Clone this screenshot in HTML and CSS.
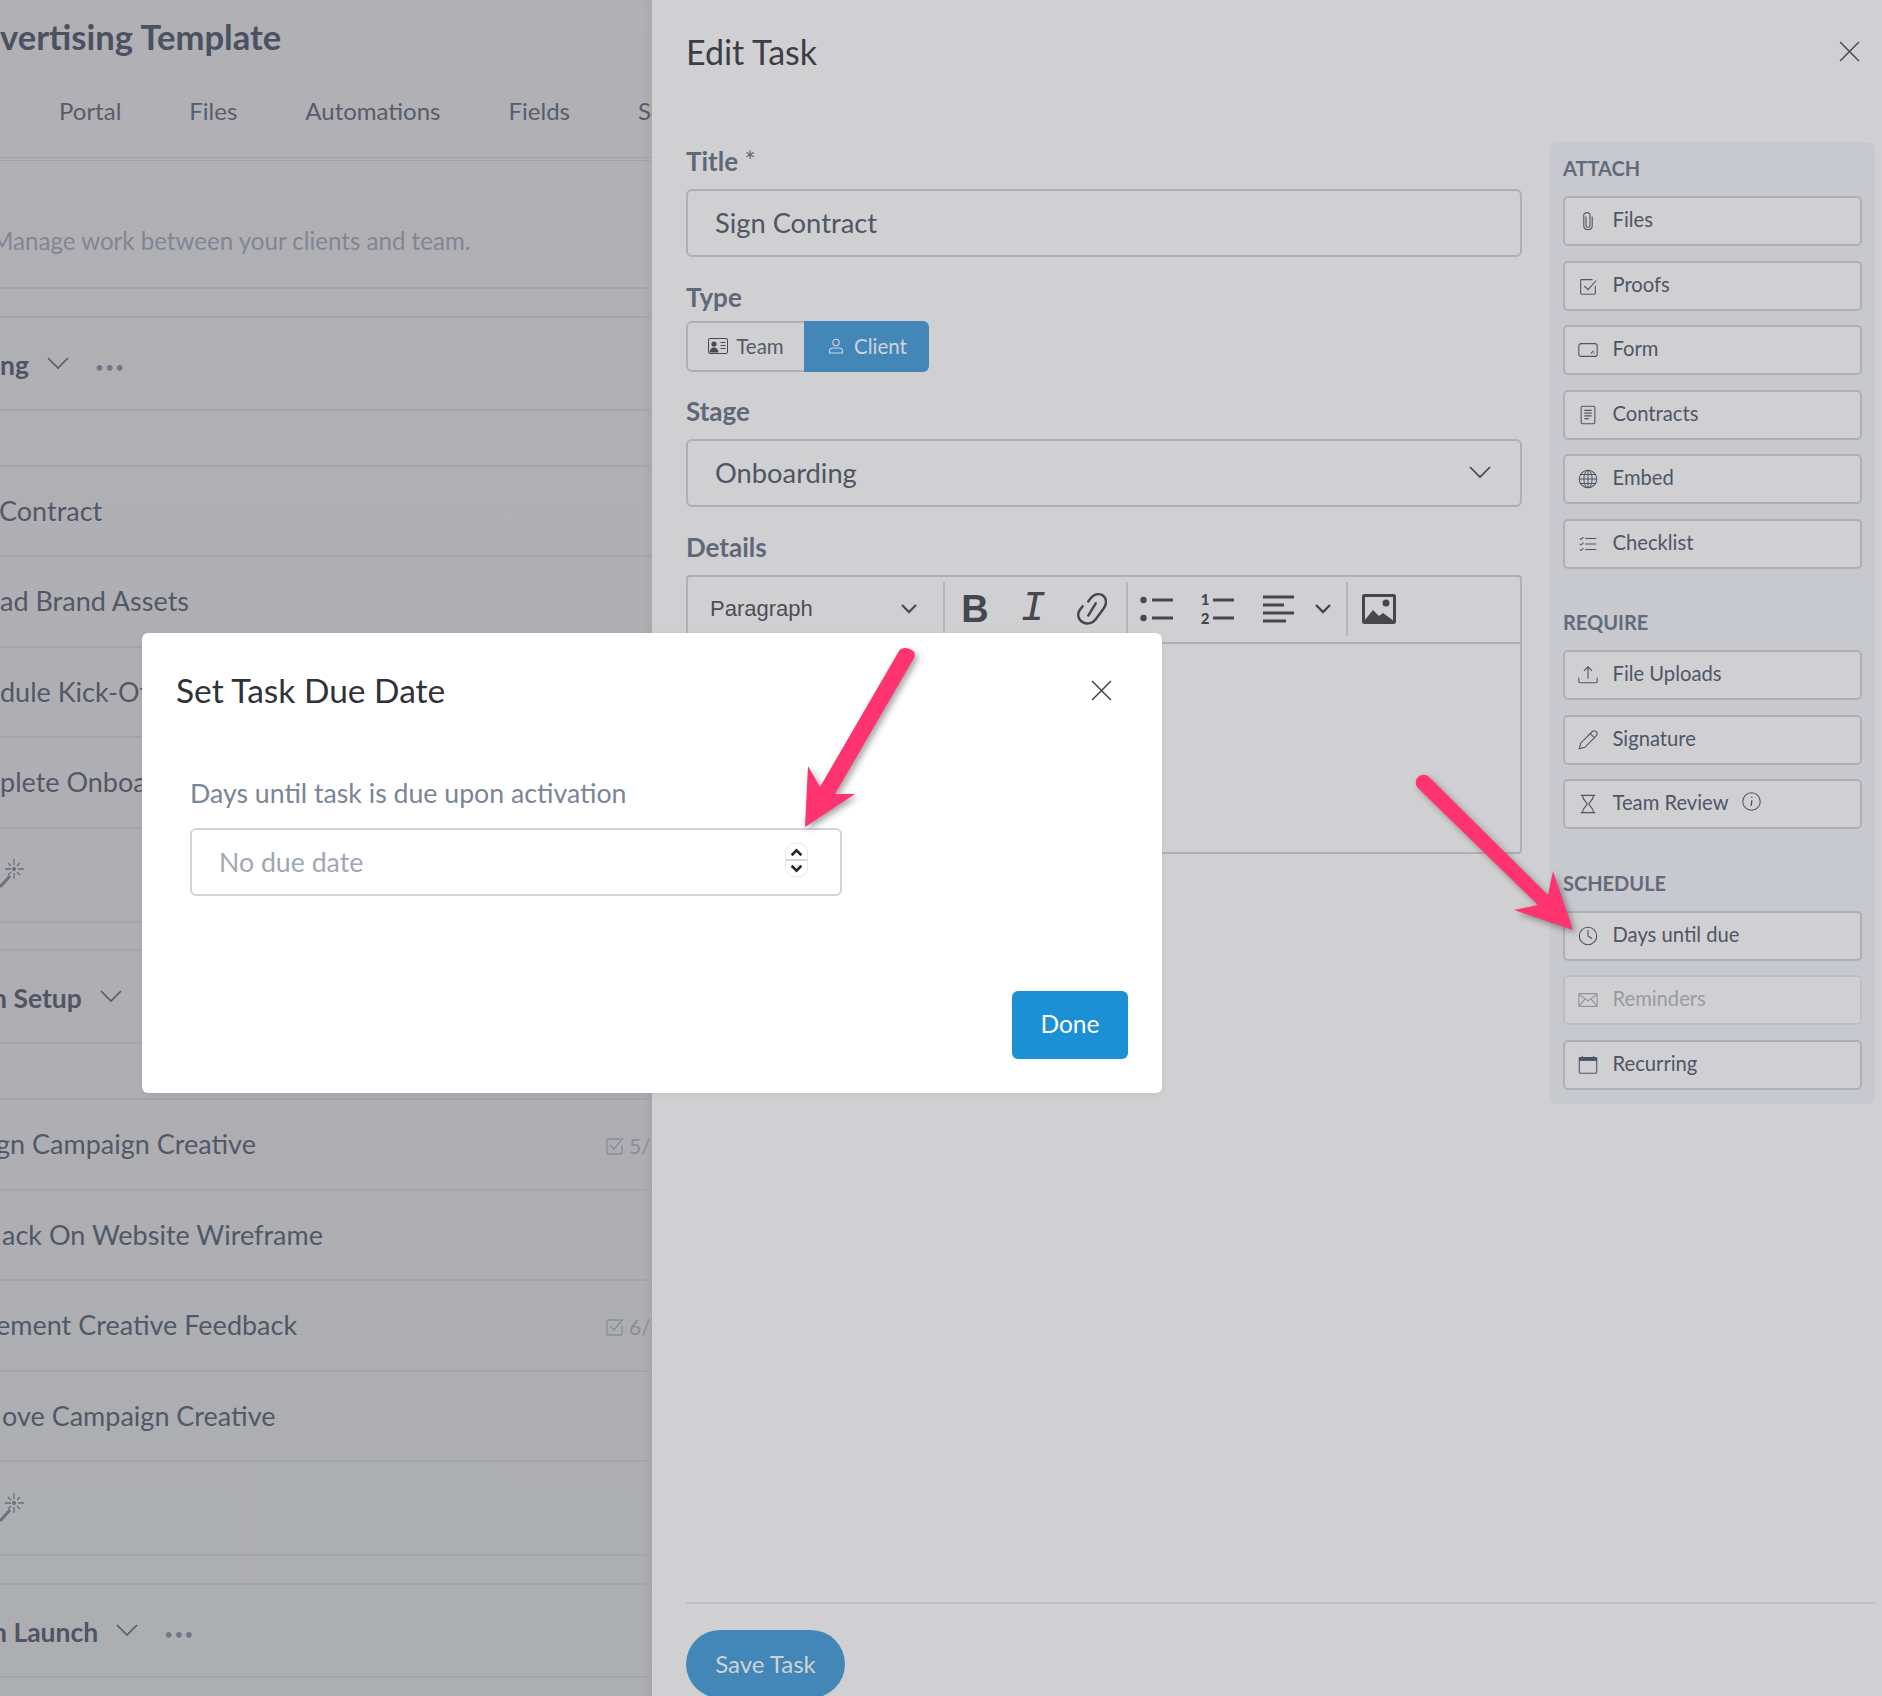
FILE: index.html
```html
<!DOCTYPE html>
<html lang="en">
<head>
  <meta charset="UTF-8">
  <title>Edit Task</title>
  <link rel="stylesheet" href="styles.css">
</head>
<body>
  <svg width="0" height="0" class="defs">
    <symbol id="chev" viewBox="0 0 24 14"><path d="M2 2l10 10L22 2" fill="none" stroke="currentColor" stroke-width="1.6"/></symbol>
    <symbol id="wand" viewBox="0 0 26 30"><path d="M0 29l10-11" stroke="currentColor" stroke-width="3" fill="none"/><path d="M14 1v6M14 15v6M5 11h6M18 11h6M8 5l3 3M20 5l-3 3M8 17l3-3M20 17l-3-3" stroke="currentColor" stroke-width="1.3" fill="none"/><circle cx="14" cy="11" r="2" fill="currentColor"/></symbol>
    <symbol id="check" viewBox="0 0 20 20"><path d="M17 9v8a1 1 0 0 1-1 1H3a1 1 0 0 1-1-1V4a1 1 0 0 1 1-1h12" fill="none" stroke="currentColor" stroke-width="1.3"/><path d="M5 9l4 4 9-11" fill="none" stroke="currentColor" stroke-width="1.3"/></symbol>
  </svg>

  <main class="page">
    <div class="project">
      <h1 class="project-title">vertising Template</h1>
      <nav class="tabs">
        <span>Portal</span><span>Files</span><span>Automations</span><span>Fields</span><span>Settings</span>
      </nav>
      <p class="project-desc">Manage work between your clients and team.</p>
      <div class="stage-gap"></div>

      <div class="stage-head"><b>ng</b><svg class="chev"><use href="#chev"/></svg><span class="dots">•••</span></div>
      <div class="row short"></div>
      <div class="row"><span class="nudge-back">Contract</span></div>
      <div class="row">ad Brand Assets</div>
      <div class="row">dule Kick-Off</div>
      <div class="row">plete Onboarding</div>
      <div class="row wand-row"><svg class="wand"><use href="#wand"/></svg></div>
      <div class="stage-gap"></div>

      <div class="stage-head"><b class="cut">n Setup</b><svg class="chev"><use href="#chev"/></svg></div>
      <div class="row short"></div>
      <div class="row"><span class="cut-letter">gn Campaign Creative</span><span class="count"><svg class="count-icon"><use href="#check"/></svg>5/5</span></div>
      <div class="row"><span class="nudge-on">ack On Website Wireframe</span></div>
      <div class="row"><span class="cut-letter">ement Creative Feedback</span><span class="count"><svg class="count-icon"><use href="#check"/></svg>6/6</span></div>
      <div class="row"><span class="nudge-on">ove Campaign Creative</span></div>
      <div class="row wand-row"><svg class="wand"><use href="#wand"/></svg></div>
      <div class="stage-gap"></div>

      <div class="stage-head"><b class="cut">n Launch</b><svg class="chev"><use href="#chev"/></svg><span class="dots">•••</span></div>
    </div>

    <aside class="drawer">
      <header class="drawer-head">
        <h2>Edit Task</h2>
        <svg class="close" viewBox="0 0 20 20"><path d="M1 1l18 18M19 1L1 19" stroke="currentColor" stroke-width="1.4" fill="none"/></svg>
      </header>

      <div class="drawer-body">
        <form class="task-form">
          <label class="field-label">Title <small>*</small></label>
          <div class="input">Sign Contract</div>

          <label class="field-label tight">Type</label>
          <div class="toggle">
            <span class="toggle-btn">
              <svg viewBox="0 0 20 16" class="toggle-icon"><rect x="0.5" y="0.5" width="19" height="15" rx="1.5" fill="none" stroke="currentColor"/><circle cx="6" cy="6" r="2.6" fill="currentColor"/><path d="M1.5 14.5c0-3 2-5 4.5-5s4.500 2 4.500 5z" fill="currentColor"/><path d="M12.500 4.500h5M12.500 7.500h5M12.500 10.500h5" stroke="currentColor" stroke-width="1.200"/></svg>Team
            </span>
            <span class="toggle-btn on">
              <svg viewBox="0 0 16 16" class="toggle-icon small"><circle cx="8" cy="4.500" r="3.200" fill="none" stroke="currentColor" stroke-width="1.100"/><path d="M1.500 15v-1.500c0-2 1.500-3.500 3.500-3.500h6c2 0 3.500 1.500 3.500 3.500V15z" fill="none" stroke="currentColor" stroke-width="1.100"/></svg>Client
            </span>
          </div>

          <label class="field-label">Stage</label>
          <div class="input select">Onboarding<svg class="select-chev"><use href="#chev"/></svg></div>

          <label class="field-label">Details</label>
          <div class="editor">
            <div class="toolbar">
              <span class="format">Paragraph<svg viewBox="0 0 18 12" class="tool-chev"><path d="M2 2l7 7 7-7" fill="none" stroke="currentColor" stroke-width="2.400"/></svg></span>
              <span class="tool-group first">
                <span class="glyph-b">B</span>
                <span class="glyph-i">I</span>
                <svg viewBox="0 0 32 36" class="tool-link"><path d="M12 10l3-4c4-5 11-5 14-1s2 9-1 13l-8 11c-3 4-9 6-14 3S0 23 3 19l3-4" fill="none" stroke="currentColor" stroke-width="2.600" stroke-linecap="round"/><path d="M12 25l8-13" stroke="currentColor" stroke-width="2.600" stroke-linecap="round"/></svg>
              </span>
              <span class="tool-group second">
                <svg viewBox="0 0 34 26" class="tool-list"><circle cx="3.500" cy="4" r="3.200" fill="currentColor"/><circle cx="3.500" cy="22" r="3.200" fill="currentColor"/><path d="M12 4h21M12 22h21" stroke="currentColor" stroke-width="3"/></svg>
                <span class="tool-num"><span class="nums"><i>1</i><i>2</i></span><svg viewBox="0 0 22 26" class="tool-numlines"><path d="M1 4h21M1 22h21" stroke="currentColor" stroke-width="3"/></svg></span>
                <svg viewBox="0 0 32 28" class="tool-align"><path d="M0 2h31M0 10h21M0 18h31M0 26h23" stroke="currentColor" stroke-width="3"/></svg>
                <svg viewBox="0 0 18 12" class="tool-chev near"><path d="M2 2l7 7 7-7" fill="none" stroke="currentColor" stroke-width="2.400"/></svg>
              </span>
              <span class="tool-group third">
                <svg viewBox="0 0 34 30" class="tool-image"><rect x="1.500" y="1.500" width="31" height="27" rx="1" fill="none" stroke="currentColor" stroke-width="3"/><circle cx="24" cy="9" r="3.500" fill="currentColor"/><path d="M2 27l9-11 6 6 4-3 11 8z" fill="currentColor"/></svg>
              </span>
            </div>
            <div class="editor-area"></div>
          </div>
        </form>

        <div class="side-panel">
          <h3>ATTACH</h3>
          <div class="side-btn"><svg viewBox="0 0 24 24"><path d="M9.800 7v10c0 2.500 4.400 2.500 4.400 0V5.500c0-3.500-6.800-3.500-6.800 0V17c0 6 9.200 6 9.200 0V7" fill="none" stroke="currentColor" stroke-width="1.200"/></svg>Files</div>
          <div class="side-btn"><svg viewBox="0 0 24 24"><path d="M20 12v8a1 1 0 0 1-1 1H5a1 1 0 0 1-1-1V6a1 1 0 0 1 1-1h12" fill="none" stroke="currentColor" stroke-width="1.200"/><path d="M8 12l4 4 9-10" fill="none" stroke="currentColor" stroke-width="1.200"/></svg>Proofs</div>
          <div class="side-btn"><svg viewBox="0 0 24 24"><rect x="2" y="5" width="20" height="14" rx="2.500" fill="none" stroke="currentColor" stroke-width="1.200"/><path d="M15 16l3-3M18 16l1-1" stroke="currentColor" stroke-width="1.100"/></svg>Form</div>
          <div class="side-btn"><svg viewBox="0 0 24 24"><rect x="4.500" y="2.500" width="15" height="19" rx="1.500" fill="none" stroke="currentColor" stroke-width="1.200"/><path d="M8 7h8M8 10h8M8 13h8M8 16h5" stroke="currentColor" stroke-width="1.200"/></svg>Contracts</div>
          <div class="side-btn"><svg viewBox="0 0 24 24"><circle cx="12" cy="12" r="9.500" fill="none" stroke="currentColor" stroke-width="1.200"/><ellipse cx="12" cy="12" rx="4.500" ry="9.500" fill="none" stroke="currentColor" stroke-width="1.100"/><path d="M12 2.500v19M2.500 12h19M4 7h16M4 17h16" stroke="currentColor" stroke-width="1.100"/></svg>Embed</div>
          <div class="side-btn"><svg viewBox="0 0 24 24"><path d="M9 6h12M9 12h12M9 18h12" stroke="currentColor" stroke-width="1.200"/><path d="M3 6l1.500 1L7 4.500M3 12l1.500 1L7 10.500M3 18l1.500 1L7 16.500" fill="none" stroke="currentColor" stroke-width="1.100"/></svg>Checklist</div>

          <h3 class="spaced">REQUIRE</h3>
          <div class="side-btn"><svg viewBox="0 0 24 24"><path d="M12 16V3M7.500 7.500L12 3l4.500 4.500" fill="none" stroke="currentColor" stroke-width="1.200"/><path d="M2 15v4c0 1 .5 1.500 1.500 1.500h17c1 0 1.500-.5 1.500-1.500v-4" fill="none" stroke="currentColor" stroke-width="1.200"/></svg>File Uploads</div>
          <div class="side-btn"><svg viewBox="0 0 24 24"><path d="M2.500 21.500l1.500-6L16.500 3c1.500-1.500 3.500-1 4.500 0s1.500 3 0 4.500L8.500 20z" fill="none" stroke="currentColor" stroke-width="1.200"/><path d="M14.500 5l4.500 4.500" stroke="currentColor" stroke-width="1.200"/></svg>Signature</div>
          <div class="side-btn"><svg viewBox="0 0 24 24"><path d="M4 2.500h16M4 21.500h16M6 2.500c0 6 5 7 5 9.500s-5 3.500-5 9.500M18 2.500c0 6-5 7-5 9.500s5 3.500 5 9.500" fill="none" stroke="currentColor" stroke-width="1.300"/></svg>Team Review<svg viewBox="0 0 24 24" class="info"><circle cx="12" cy="12" r="10" fill="none" stroke="currentColor" stroke-width="1.200"/><path d="M12.500 10.500l-1 6.500M11.500 7h1.500" fill="none" stroke="currentColor" stroke-width="1.500"/></svg></div>

          <h3 class="spaced">SCHEDULE</h3>
          <div class="side-btn"><svg viewBox="0 0 24 24"><circle cx="12" cy="12" r="9.500" fill="none" stroke="currentColor" stroke-width="1.200"/><path d="M12 5.500V12l4.500 3" fill="none" stroke="currentColor" stroke-width="1.200"/></svg>Days until due</div>
          <div class="side-btn off"><svg viewBox="0 0 24 24"><rect x="2" y="5" width="20" height="14" rx="1" fill="none" stroke="currentColor" stroke-width="1.200"/><path d="M2.500 6L12 13l9.500-7M2.500 18.500L9 10.500M21.500 18.500L15 10.500" fill="none" stroke="currentColor" stroke-width="1.200"/></svg>Reminders</div>
          <div class="side-btn"><svg viewBox="0 0 24 24"><rect x="2.500" y="4" width="19" height="17" rx="1" fill="none" stroke="currentColor" stroke-width="1.200"/><path d="M2.500 4h19v3h-19zM6 2v2M18 2v2" fill="currentColor" stroke="currentColor" stroke-width="1"/></svg>Recurring</div>
        </div>
      </div>

      <footer class="drawer-foot">
        <button type="button" class="save-btn">Save Task</button>
      </footer>
    </aside>
  </main>

  <div class="modal">
    <div class="modal-head">
      <h2>Set Task Due Date</h2>
      <svg class="modal-close" viewBox="0 0 20 20"><path d="M1 1l18 18M19 1L1 19" stroke="currentColor" stroke-width="1.400" fill="none"/></svg>
    </div>
    <label class="modal-label">Days until task is due upon activation</label>
    <div class="modal-input">
      <span>No due date</span>
      <span class="spinner">
        <svg viewBox="0 0 12 8"><path d="M1.500 6.500L6 2l4.500 4.500" fill="none" stroke="currentColor" stroke-width="2.400"/></svg>
        <svg viewBox="0 0 12 8"><path d="M1.500 1.500L6 6l4.500-4.500" fill="none" stroke="currentColor" stroke-width="2.400"/></svg>
      </span>
    </div>
    <div class="modal-foot"><button type="button" class="done-btn">Done</button></div>
  </div>

  <!-- callout arrows drawn on the screenshot -->
  <svg class="callouts" viewBox="0 0 1882 1696">
    <path d="M899 651C902 646 910 648 914 652C915 654 915 656 914 658L835 794L855 794L805 827L808 766L820 787Z"/>
    <path d="M1418 777C1421 774 1426 774 1429 777L1548 895L1553 871L1573 930L1514 910L1538 905L1418 788C1415 785 1415 780 1418 777Z"/>
  </svg>
</body>
</html>
```

FILE: styles.css
```css
* { box-sizing: border-box; }
html, body {
  margin: 0;
  height: 1696px;
  overflow: hidden;
}
body {
  position: relative;
  font-family: 'Lato', sans-serif;
  background: #d0d0d2;
  color: #4e5563;
}
.defs { position: absolute; }
.page {
  display: flex;
  height: 1696px;
}

/* dimmed project page on the left */
.project {
  width: 652px;
  flex: none;
  overflow: hidden;
  background: linear-gradient(#b1b0b4, #adaeb2);
  box-shadow: inset -8px 0 8px -6px rgba(0,0,0,0.06);
  font-size: 27px;
}
.project-title {
  margin: 0;
  height: 78px;
  padding-top: 16px;
  font-size: 34.600px;
  line-height: 42px;
  font-weight: 700;
  color: #4a5160;
  white-space: nowrap;
}
.tabs {
  display: flex;
  gap: 68px;
  height: 83px;
  padding: 17px 0 0 59px;
  font-size: 24px;
  line-height: 32px;
  color: #565d6c;
  border-bottom: 4px double #a0a1a9;
  white-space: nowrap;
}
.project-desc {
  margin: 0;
  height: 128px;
  padding-top: 64px;
  margin-left: -9px;
  font-size: 24.100px;
  line-height: 32px;
  color: #7f8694;
  white-space: nowrap;
  border-bottom: 2px solid #a3a4ac;
}
.stage-gap {
  height: 28.500px;
  border-bottom: 2px solid #a3a4ac;
}
.stage-head {
  display: flex;
  align-items: center;
  height: 93px;
  padding-top: 3px;
  border-bottom: 2px solid #a3a4ac;
  font-size: 26.500px;
  color: #4e5564;
}
.stage-head b { white-space: nowrap; }
.stage-head b.cut { margin-left: -8px; }
.chev {
  width: 24px;
  height: 14px;
  margin: -4px 0 0 17px;
  color: #565d6c;
}
.dots {
  margin: 5px 0 0 25px;
  font-size: 15px;
  letter-spacing: 1.500px;
  color: #70778a;
}
.row {
  display: flex;
  align-items: center;
  position: relative;
  height: 90.500px;
  border-bottom: 2px solid #a3a4ac;
  line-height: 34px;
  color: #515867;
  white-space: nowrap;
}
.row.short { height: 56px; }
/* names run off the left edge of the panel, each by its own amount */
.cut-letter { margin-left: -4px; }
.nudge-back { margin-left: -1px; }
.nudge-on { margin-left: 2px; }
.wand-row { height: 94px; }
.wand {
  width: 26px;
  height: 30px;
  margin: -3px 0 0 0;
  color: #6a7080;
}
.count {
  position: absolute;
  left: 605px;
  display: flex;
  align-items: center;
  gap: 4px;
  margin-top: 3px;
  font-size: 21px;
  color: #878d9a;
}
.count-icon {
  width: 20px;
  height: 20px;
}

/* edit task drawer */
.drawer {
  flex: 1;
  min-width: 0;
  display: flex;
  flex-direction: column;
  height: 1696px;
  overflow: hidden;
  background: #d0d0d2;
}
.drawer-head {
  display: flex;
  justify-content: space-between;
  align-items: center;
  height: 102px;
  flex: none;
  padding: 0 22px 0 34px;
  margin-bottom: 40px;
}
.drawer-head h2 {
  margin: 0;
  font-size: 34px;
  font-weight: 400;
  color: #3b3e45;
}
.close {
  width: 21px;
  height: 21px;
  color: #474b54;
}
.drawer-body {
  display: flex;
  flex: 1;
  gap: 28px;
  align-items: flex-start;
  padding: 0 7px 0 34px;
}
.task-form {
  width: 836px;
  flex: none;
  padding-top: 5px;
}
.field-label {
  display: block;
  height: 30px;
  margin-bottom: 12px;
  font-size: 26px;
  line-height: 29px;
  font-weight: 700;
  color: #5f6878;
}
.field-label small {
  font-size: 26px;
  font-weight: 400;
}
.field-label.tight { margin-bottom: 8px; }
.input {
  display: flex;
  align-items: center;
  justify-content: space-between;
  height: 68px;
  margin-bottom: 26px;
  padding: 0 28px 2px 27px;
  border: 2px solid #aeb0b9;
  border-radius: 6px;
  font-size: 27.300px;
  color: #4e5563;
}
.select-chev {
  width: 24px;
  height: 14px;
  color: #3f4450;
}
.toggle {
  display: flex;
  height: 51px;
  margin-bottom: 25px;
  font-size: 20.500px;
}
.toggle-btn {
  display: flex;
  align-items: center;
  justify-content: center;
  gap: 8px;
  width: 118px;
  padding-bottom: 1px;
  border: 2px solid #aeb0b9;
  border-right: none;
  border-radius: 6px 0 0 6px;
  color: #545b69;
}
.toggle-btn.on {
  width: 125px;
  background: #4287b8;
  border: none;
  border-radius: 0 6px 6px 0;
  color: #d2d4d8;
}
.toggle-icon {
  width: 20px;
  height: 16px;
  color: #454a55;
}
.toggle-btn.on .toggle-icon {
  color: #d2d4d8;
}
.editor {
  height: 279px;
  border: 2px solid #aeb0b9;
  border-radius: 4px;
}
.toolbar {
  display: flex;
  align-items: center;
  height: 67px;
  padding-bottom: 2px;
  border-bottom: 2px solid #aeb0b9;
  color: #45474d;
}
.format {
  display: flex;
  align-items: center;
  justify-content: space-between;
  width: 255px;
  height: 54px;
  padding: 0 25px 0 22px;
  font-family: 'Liberation Sans', sans-serif;
  font-size: 22px;
  color: #4c4e54;
}
.tool-chev {
  width: 18px;
  height: 12px;
}
.tool-group {
  display: flex;
  align-items: center;
  height: 54px;
  border-left: 2px solid #b6b7bd;
}
.tool-group.first { width: 183px; padding-left: 15px; }
.tool-group.second { width: 220px; padding-left: 12px; }
.tool-group.third { padding-left: 14px; }
.glyph-b {
  width: 30px;
  font-family: 'Liberation Sans', sans-serif;
  font-size: 38px;
  font-weight: 700;
  line-height: 40px;
  text-align: center;
}
.glyph-i {
  width: 26px;
  margin-left: 30px;
  font-family: 'Liberation Mono', monospace;
  font-size: 42px;
  font-style: italic;
  line-height: 40px;
  text-align: center;
}
.tool-link {
  width: 30px;
  height: 34px;
  margin-left: 31px;
}
.tool-list {
  width: 34px;
  height: 26px;
}
.tool-num {
  display: flex;
  align-items: center;
  width: 36px;
  margin-left: 24px;
}
.nums {
  display: flex;
  flex-direction: column;
  width: 14px;
  font-size: 15px;
  font-weight: 900;
  line-height: 19px;
  text-align: center;
}
.nums i { font-style: normal; }
.tool-numlines {
  width: 22px;
  height: 26px;
}
.tool-align {
  width: 32px;
  height: 28px;
  margin-left: 29px;
}
.tool-chev.near { margin-left: 19px; }
.tool-image {
  width: 34px;
  height: 30px;
}

/* right hand side panel */
.side-panel {
  width: 325px;
  flex: none;
  height: 962px;
  padding: 13px 13px 0;
  background: #c8c9ce;
  border-radius: 8px;
}
.side-panel h3 {
  margin: 0 0 14px;
  height: 27px;
  font-size: 20px;
  line-height: 27px;
  font-weight: 700;
  color: #626b7b;
}
.side-panel h3.spaced { margin-top: 40.500px; }
.side-btn {
  display: flex;
  align-items: center;
  height: 50px;
  margin-bottom: 14.500px;
  padding: 0 0 4px 12px;
  background: #d0d0d2;
  border: 2px solid #aeb0b9;
  border-radius: 5px;
  font-size: 20.200px;
  color: #4e5666;
}
.side-btn > svg:first-child {
  width: 22px;
  height: 22px;
  flex: none;
  margin: 4px 13.500px 0 0;
  color: #4e5666;
}
.side-btn .info {
  width: 21px;
  height: 21px;
  margin-left: 12px;
  margin-top: -2px;
}
.side-btn.off {
  color: #979ba5;
  border-color: #bcbec5;
}
.side-btn.off > svg:first-child { color: #90949f; }

/* footer */
.drawer-foot {
  flex: none;
  height: 94px;
  margin: 0 7px 0 34px;
  padding-top: 26px;
  border-top: 2px solid #c0c1c8;
}
.save-btn {
  width: 159px;
  height: 68px;
  padding: 0 0 2px;
  background: #4287b8;
  border: none;
  border-radius: 34px;
  font-family: 'Lato', sans-serif;
  font-size: 24px;
  color: #d0d2d6;
}

/* modal */
.modal {
  position: absolute;
  left: 142px;
  top: 633px;
  width: 1020px;
  height: 460px;
  padding: 0 34px 0 34px;
  background: #fff;
  border-radius: 6px;
  box-shadow: 0 2px 6px rgba(0,0,0,0.06);
}
.modal-head {
  display: flex;
  align-items: center;
  justify-content: space-between;
  height: 115px;
  padding-right: 16px;
}
.modal-head h2 {
  margin: 0 0 2px;
  font-size: 33.500px;
  font-weight: 400;
  color: #2f3238;
}
.modal-close {
  width: 21px;
  height: 21px;
  color: #3d4048;
}
.modal-label {
  display: block;
  height: 32px;
  margin: 29px 0 19px 14px;
  font-size: 26.700px;
  line-height: 32px;
  color: #7a8596;
}
.modal-input {
  display: flex;
  align-items: center;
  justify-content: space-between;
  width: 652px;
  height: 68px;
  margin-left: 14px;
  padding: 0 32px 0 27px;
  border: 2px solid #ced3dc;
  border-radius: 6px;
  font-size: 26.700px;
  color: #a1a7b2;
}
.spinner {
  display: flex;
  flex-direction: column;
  align-items: center;
  justify-content: space-around;
  width: 23px;
  height: 34px;
  margin-bottom: 4px;
  border: 1px solid #e8e8ea;
  border-radius: 9px;
  background: linear-gradient(#fff 47%, #d8d8da 47%, #d8d8da 53%, #fff 53%);
  color: #26272b;
}
.spinner svg {
  width: 13px;
  height: 9px;
}
.modal-foot {
  display: flex;
  justify-content: flex-end;
  margin-top: 95px;
}
.done-btn {
  width: 116px;
  height: 68px;
  padding: 0 0 3px;
  background: #1c90d4;
  border: none;
  border-radius: 6px;
  font-family: 'Lato', sans-serif;
  font-size: 24.500px;
  color: #fff;
}

.callouts {
  position: absolute;
  left: 0;
  top: 0;
  width: 1882px;
  height: 1696px;
  pointer-events: none;
  fill: #ff3370;
  filter: drop-shadow(3px 3px 3px rgba(0,0,0,0.35));
}
```
